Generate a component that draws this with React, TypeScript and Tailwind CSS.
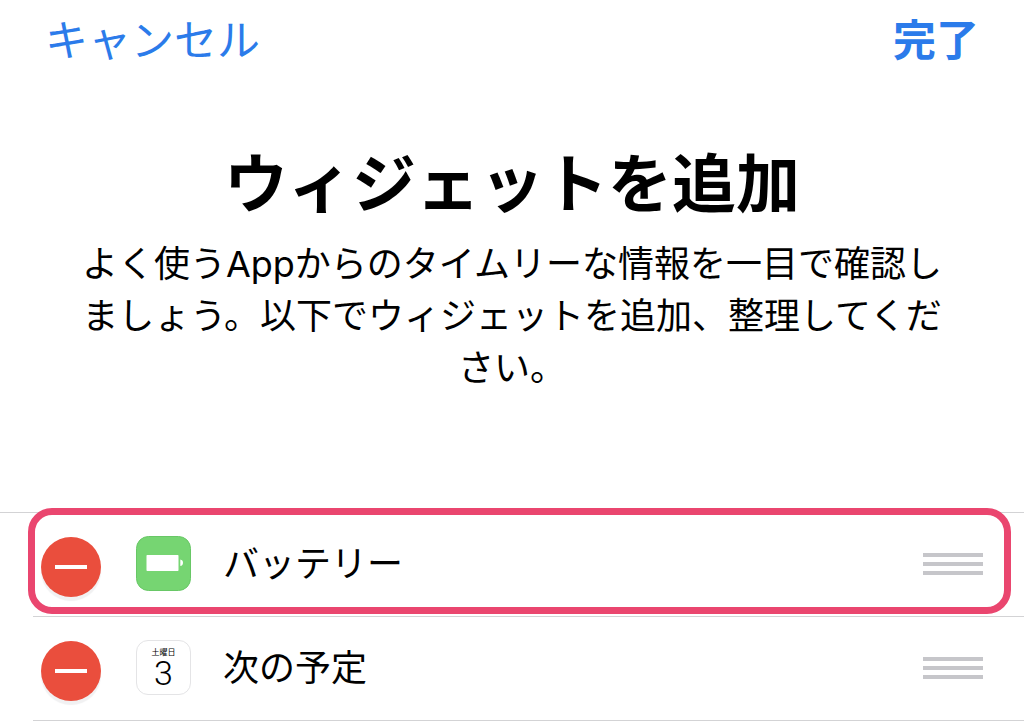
import { useState } from 'react';
import type { ReactNode } from 'react';

interface Widget {
  id: string;
  name: string;
  icon: ReactNode;
  highlighted?: boolean;
}

const BatteryIcon = () => (
  <svg viewBox="0 0 55 55" className="h-[55px] w-[55px]" aria-hidden="true">
    <rect x="0.5" y="0.5" width="54" height="54" rx="12" fill="#76d572" stroke="#68c766" />
    <rect x="10.5" y="19" width="32" height="16" rx="0.8" fill="#fff" />
    <path d="M44.300 23.500c1.700 .3 2.700 1.600 2.700 3.300s-1 3-2.700 3.300z" fill="#fff" />
  </svg>
);

const CalendarIcon = () => (
  <div className="flex h-[55px] w-[55px] flex-col items-center rounded-xl border border-[#e4e4e6] bg-white pt-[5px] text-black">
    <span className="text-[8px] leading-3">土曜日</span>
    <span className="font-['Roboto'] text-[34px] font-light leading-[30px]">3</span>
  </div>
);

const initialWidgets: Widget[] = [
  { id: 'battery', name: 'バッテリー', icon: <BatteryIcon />, highlighted: true },
  { id: 'next', name: '次の予定', icon: <CalendarIcon /> },
];

interface WidgetRowProps {
  widget: Widget;
  onRemove: (id: string) => void;
}

const WidgetRow = ({ widget, onRemove }: WidgetRowProps) => {
  return (
    <li className="relative pl-[33px]">
      <div className="flex h-[104px] items-center border-b border-[#d3d3d5] pb-0.5 pl-2 pr-[41px]">
        <button
          type="button"
          aria-label={`${widget.name}を削除`}
          onClick={() => onRemove(widget.id)}
          className="mt-1.5 flex h-[60px] w-[60px] items-center justify-center rounded-full bg-[#ea4e3d] shadow-[0_4px_1px_#f1f1f2]"
        >
          <span className="h-1 w-8 bg-white" />
        </button>
        <div className="ml-[35px]">{widget.icon}</div>
        <span className="ml-8 flex-1 text-[36px] leading-[52px]">{widget.name}</span>
        <button type="button" aria-label={`${widget.name}を並べ替え`} className="flex flex-col gap-[5px]">
          <span className="h-1 w-[60px] bg-[#c6c6ca]" />
          <span className="h-1 w-[60px] bg-[#c6c6ca]" />
          <span className="h-1 w-[60px] bg-[#c6c6ca]" />
        </button>
      </div>

      {/* Highlight frame */}
      {widget.highlighted && (
        <div className="pointer-events-none absolute -top-[5px] bottom-[3px] left-7 right-[13px] rounded-3xl border-[7px] border-[#ea466f]" />
      )}
    </li>
  );
};

const App = () => {
  const [widgets, setWidgets] = useState(initialWidgets);

  const removeWidget = (id: string) => {
    setWidgets(widgets.filter((widget) => widget.id !== id));
  };

  return (
    <div className="bg-white font-['Inter','Noto_Sans_CJK_JP',sans-serif] text-black" lang="ja">
      <header className="flex items-center justify-between px-[45px] pt-2 text-[43px] leading-[64px] text-[#2b7bea]">
        <button type="button">キャンセル</button>
        <button type="button" className="font-bold">完了</button>
      </header>

      <main>
        <section className="px-[76px] pt-16 text-center">
          <h1 className="text-[64px] font-bold leading-[96px]">ウィジェットを追加</h1>
          <p className="mt-[6px] text-[36px] leading-[52px]">
            よく使うAppからのタイムリーな情報を一目で確認しましょう。以下でウィジェットを追加、整理してください。
          </p>
        </section>

        {/* Active widgets */}
        <ul className="mt-[118px] border-t border-[#d3d3d5]">
          {widgets.map((widget) => (
            <WidgetRow key={widget.id} widget={widget} onRemove={removeWidget} />
          ))}
        </ul>
      </main>
    </div>
  );
};

export default App;
